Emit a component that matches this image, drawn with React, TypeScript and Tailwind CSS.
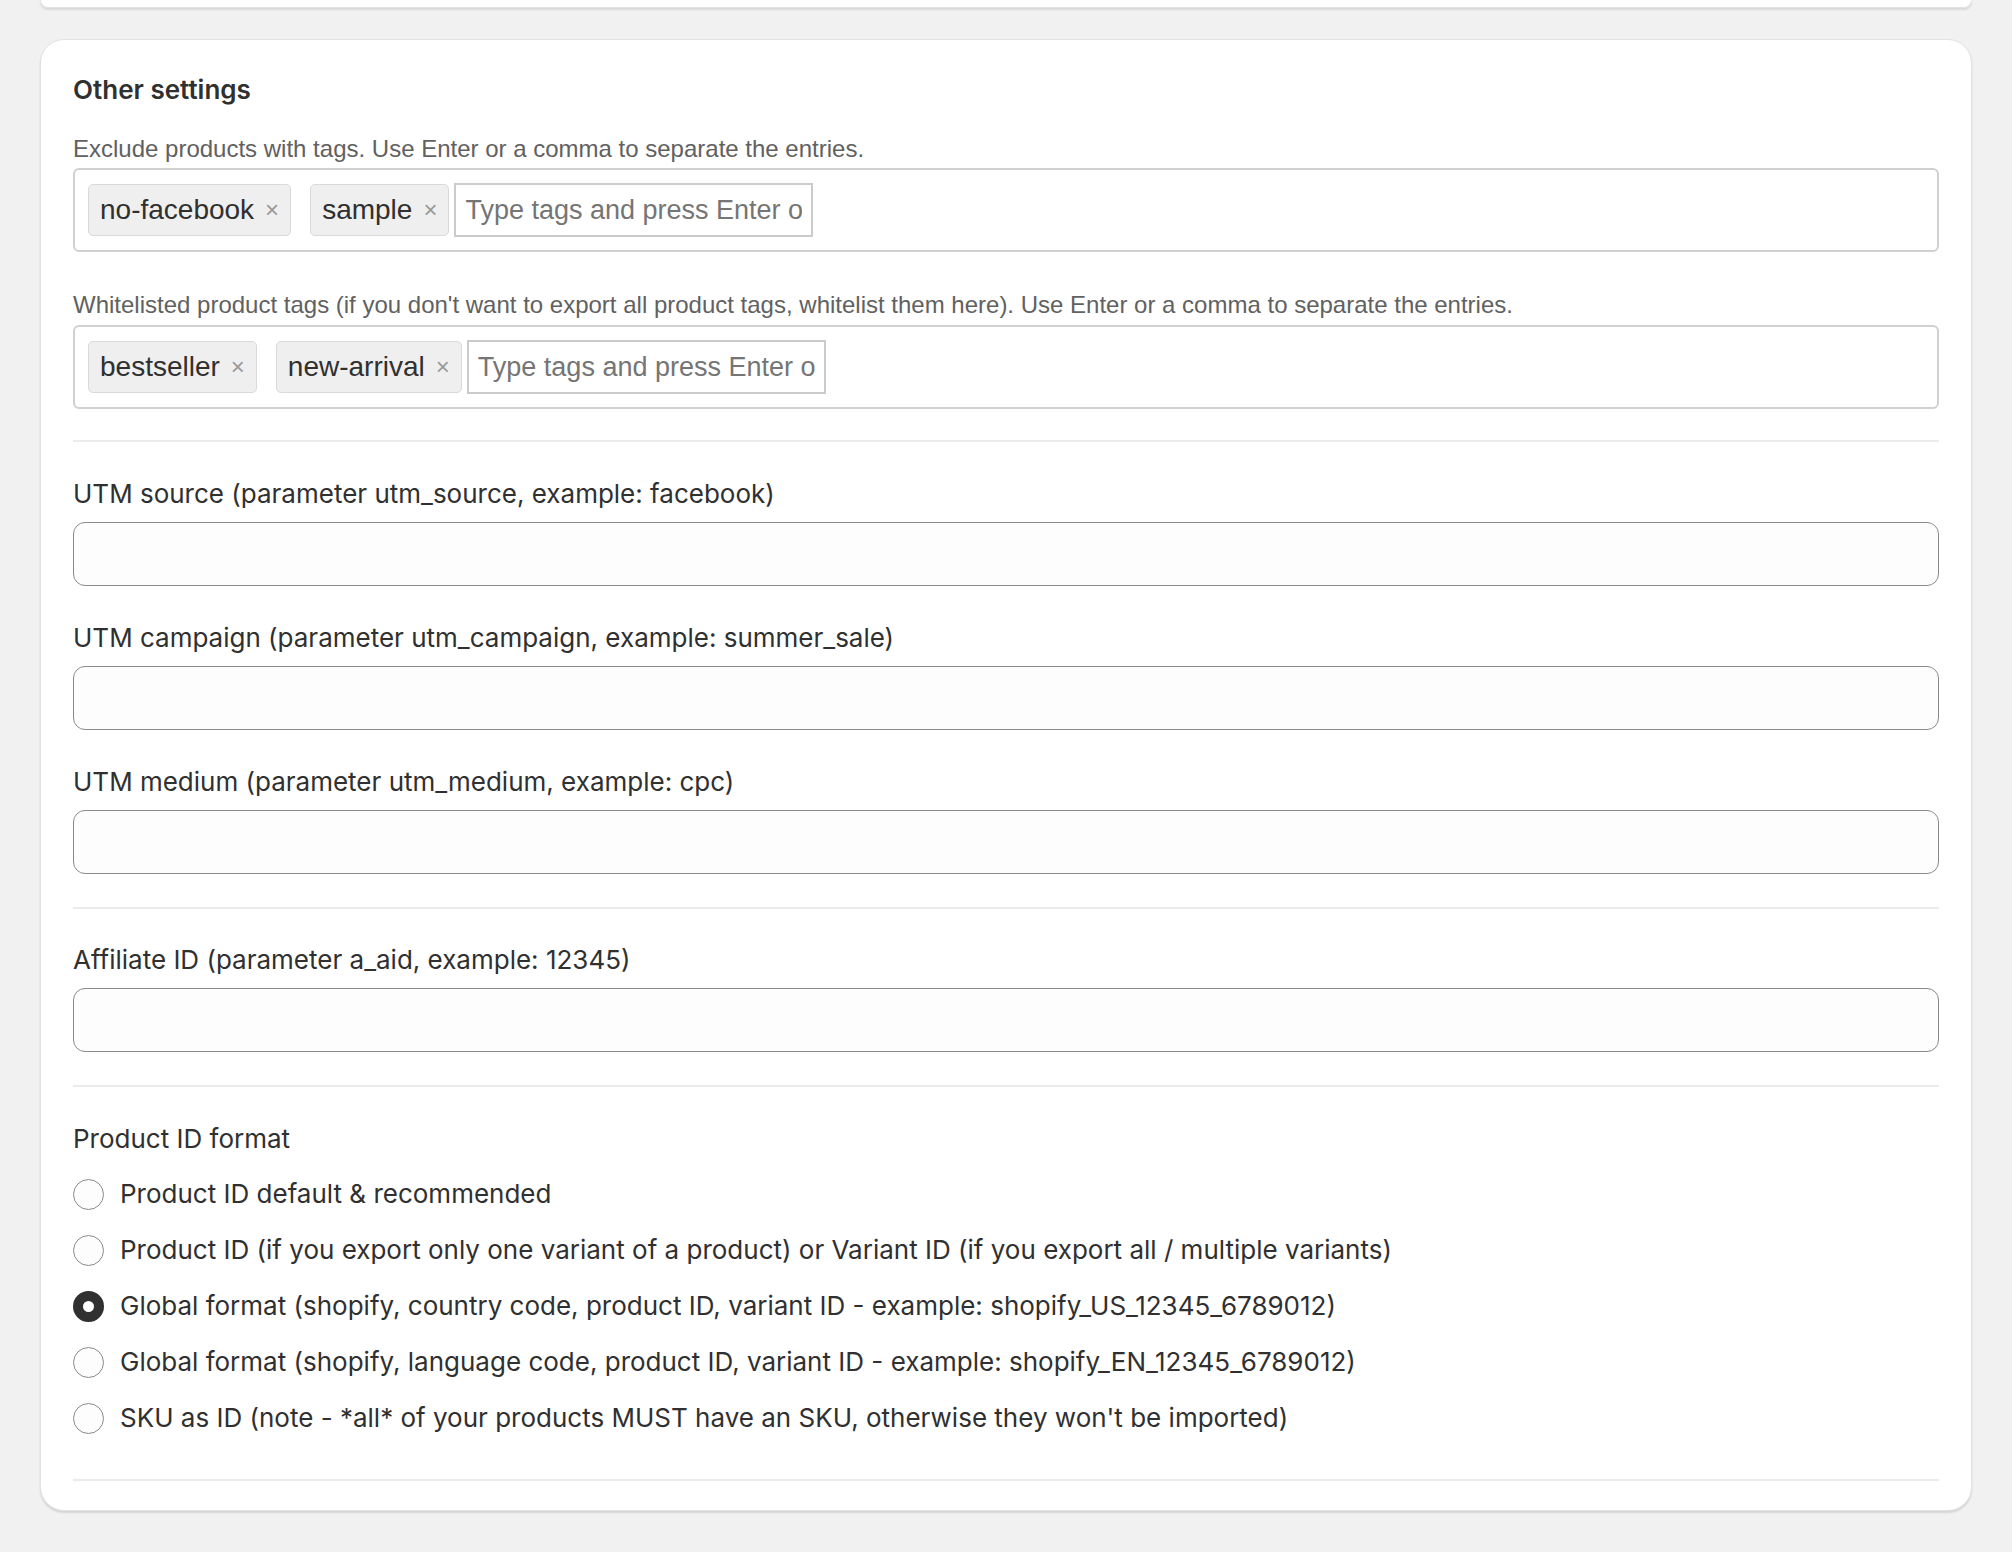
import { useState } from 'react';

const tagFont = "font-['Liberation_Sans',Arial,sans-serif]";

function Tag({ label, last }: { label: string; last?: boolean }) {
  return (
    <span
      className={`flex h-[52px] shrink-0 items-center gap-[11px] rounded-[5px] border border-[#d9d9d9] bg-[#efefef] pl-[11px] pr-[11px] text-[28px] text-[#303030] ${
        last ? 'mr-[5px]' : 'mr-[19px]'
      }`}
    >
      <span>{label}</span>
      <span className="text-[24px] text-[#9a9a9a]">×</span>
    </span>
  );
}

function TagInput({ tags }: { tags: string[] }) {
  return (
    <div className={`flex items-center rounded-[6px] border-2 border-[#d0d0d0] p-[13px] ${tagFont}`}>
      {tags.map((t, i) => (
        <Tag key={t} label={t} last={i === tags.length - 1} />
      ))}
      <input
        type="text"
        placeholder="Type tags and press Enter or comma"
        className="h-[54px] w-[359px] border-2 border-[#cbcbcb] bg-white px-[9px] text-[27px] text-[#303030] outline-none placeholder:text-[#757575]"
      />
    </div>
  );
}

function Field({ label }: { label: string }) {
  return (
    <div className="mt-[34px]">
      <label className="block text-[26px] leading-[36px] text-[#303030]">{label}</label>
      <input
        type="text"
        className="mt-[10px] h-[64px] w-full rounded-[12px] border border-[#8a8a8a] bg-[#fdfdfd] px-[18px] text-[26px] outline-none"
      />
    </div>
  );
}

const idOptions = [
  'Product ID default & recommended',
  'Product ID (if you export only one variant of a product) or Variant ID (if you export all / multiple variants)',
  'Global format (shopify, country code, product ID, variant ID - example: shopify_US_12345_6789012)',
  'Global format (shopify, language code, product ID, variant ID - example: shopify_EN_12345_6789012)',
  "SKU as ID (note - *all* of your products MUST have an SKU, otherwise they won't be imported)",
];

export default function App() {
  const [selected, setSelected] = useState(2);

  return (
    <div className="min-h-screen bg-[#f1f1f2] px-[40px] font-[Inter,sans-serif]">
      {/* previous card, only its bottom edge shows */}
      <div className="h-[8px] rounded-b-[24px] border-x border-b border-[#e3e3e3] bg-white shadow-[0_2px_2px_rgba(0,0,0,0.1)]" />

      <div className="mt-[31px] rounded-[24px] border border-[#e3e3e3] bg-white px-[32px] pt-[32px] pb-[29px] shadow-[0_2px_2px_rgba(0,0,0,0.12)]">
        <h2 className="text-[26px] font-semibold leading-[36px] text-[#303030]">Other settings</h2>

        <p className={`mt-[23px] text-[24px] leading-[36px] text-[#616161] ${tagFont}`}>
          Exclude products with tags. Use Enter or a comma to separate the entries.
        </p>
        <div className="mt-[1px]">
          <TagInput tags={['no-facebook', 'sample']} />
        </div>

        <p className={`mt-[35px] text-[24px] leading-[36px] text-[#616161] ${tagFont}`}>
          Whitelisted product tags (if you don't want to export all product tags, whitelist them here). Use Enter or a
          comma to separate the entries.
        </p>
        <div className="mt-[2px]">
          <TagInput tags={['bestseller', 'new-arrival']} />
        </div>

        <div className="mt-[31px] h-[2px] bg-[#ebebeb]" />

        <Field label="UTM source (parameter utm_source, example: facebook)" />
        <Field label="UTM campaign (parameter utm_campaign, example: summer_sale)" />
        <Field label="UTM medium (parameter utm_medium, example: cpc)" />

        <div className="mt-[33px] h-[2px] bg-[#ebebeb]" />

        <div className="-mt-px">
          <Field label="Affiliate ID (parameter a_aid, example: 12345)" />
        </div>

        <div className="mt-[33px] h-[2px] bg-[#ebebeb]" />

        <p className="mt-[34px] text-[26px] leading-[36px] text-[#303030]">Product ID format</p>
        <div className="mt-[19px] flex flex-col gap-[20px]">
          {idOptions.map((opt, i) => (
            <label key={i} className="flex cursor-pointer items-center gap-[16px]" onClick={() => setSelected(i)}>
              <span
                className={
                  selected === i
                    ? 'h-[31px] w-[31px] shrink-0 rounded-full border-[10px] border-[#303030] bg-white'
                    : 'h-[31px] w-[31px] shrink-0 rounded-full border border-[#8a8a8a] bg-[#fdfdfd]'
                }
              />
              <span className="text-[26px] leading-[36px] text-[#303030]">{opt}</span>
            </label>
          ))}
        </div>

        <div className="mt-[43px] h-[2px] bg-[#ebebeb]" />
      </div>
    </div>
  );
}
